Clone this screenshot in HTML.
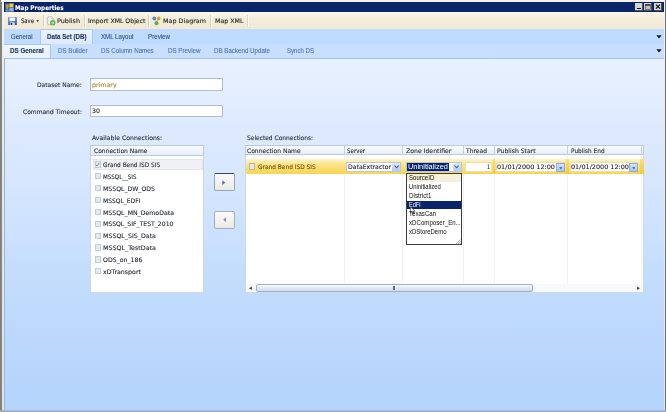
<!DOCTYPE html>
<html><head><meta charset="utf-8">
<style>
*{box-sizing:border-box;margin:0;padding:0}
html,body{width:666px;height:412px;overflow:hidden;background:#c8c8c8}
body{position:relative;font-family:"DejaVu Sans","Liberation Sans",sans-serif;font-size:6px;color:#1c2a44}
#all{position:absolute;left:0;top:0;width:666px;height:412px;filter:blur(0.4px)}
.abs{position:absolute;white-space:nowrap}
span.abs{-webkit-text-stroke:0.1px currentColor}
</style></head><body><div id="all">
<!-- frame -->
<div class="abs" style="left:0;top:0;width:666px;height:412px;background:#c9c9c9"></div>
<div class="abs" style="left:0;top:0;width:1.5px;height:412px;background:#828282"></div>
<div class="abs" style="left:664.7px;top:0;width:1.3px;height:412px;background:#707070"></div>
<div class="abs" style="left:0;top:410.4px;width:666px;height:1.6px;background:#a8a8a8"></div>
<div class="abs" style="left:1px;top:0;width:663.7px;height:2px;background:#f2f2f0"></div>
<div class="abs" style="left:2px;top:0.6px;width:662.7px;height:409.9px;background:linear-gradient(#f6f5f1,#eeece6 60px,#e6e4de 100%)"></div>
<!-- title -->
<div class="abs" style="left:4px;top:2px;width:659.7px;height:10.2px;background:#0a246a"></div>
<!-- title icon -->
<svg class="abs" style="left:5px;top:2.8px" width="9" height="9" viewBox="0 0 9 9"><rect x="0" y="0" width="9" height="9" fill="#32508f"/><path d="M0.6 1.2 H3.8 V4 L3 6.2 H1.4 L0.6 4Z" fill="#b3964a"/><rect x="4.4" y="0.6" width="4" height="3.8" fill="#f4cc30"/><rect x="4.4" y="5" width="4.2" height="3.4" fill="#8fb0e4"/><rect x="0.6" y="6.6" width="3.2" height="1.8" fill="#7d9ad6"/></svg>
<!-- caption buttons -->
<div class="abs" style="left:635px;top:3.2px;width:8.3px;height:7.5px;background:#d6d3cc;border-right:1px solid #555;border-bottom:1px solid #555"></div>
<div class="abs" style="left:637px;top:8.2px;width:3.6px;height:1.2px;background:#111"></div>
<div class="abs" style="left:643.8px;top:3.2px;width:8.3px;height:7.5px;background:#d6d3cc;border-right:1px solid #555;border-bottom:1px solid #555"></div>
<svg class="abs" style="left:645px;top:3.8px" width="6" height="6" viewBox="0 0 6 6"><rect x="0.5" y="0.9" width="4.8" height="4.4" fill="#c4c2bc" stroke="#3a3a3a" stroke-width="0.6"/><rect x="0.2" y="0.3" width="5.4" height="1.3" fill="#222"/></svg>
<div class="abs" style="left:654px;top:3.2px;width:8.3px;height:7.5px;background:#d6d3cc;border-right:1px solid #555;border-bottom:1px solid #555"></div>
<svg class="abs" style="left:654px;top:3.2px" width="8.3" height="7.5" viewBox="0 0 8.3 7.5"><path d="M2 1.6 L6 5.6 M6 1.6 L2 5.6" stroke="#111" stroke-width="1.3" fill="none"/></svg>
<!-- toolbar -->
<div class="abs" style="left:4px;top:12.2px;width:659.7px;height:17px;background:linear-gradient(#fbf8ee,#f3ecd9 40%,#f1e9d3)"></div>
<div class="abs" style="left:43px;top:15px;width:1px;height:12px;background:#d6cfbb;box-shadow:1px 0 0 #fdfbf5"></div>
<div class="abs" style="left:83.8px;top:15px;width:1px;height:12px;background:#d6cfbb;box-shadow:1px 0 0 #fdfbf5"></div>
<div class="abs" style="left:148px;top:15px;width:1px;height:12px;background:#d6cfbb;box-shadow:1px 0 0 #fdfbf5"></div>
<div class="abs" style="left:210px;top:15px;width:1px;height:12px;background:#d6cfbb;box-shadow:1px 0 0 #fdfbf5"></div>
<div class="abs" style="left:246.6px;top:15px;width:1px;height:12px;background:#ded7c6;box-shadow:1px 0 0 #fdfbf5"></div>
<!-- save icon -->
<svg class="abs" style="left:8.2px;top:16.8px" width="8.8" height="8.4" viewBox="0 0 8.8 8.4"><defs><linearGradient id="sv" x1="0" y1="0" x2="1" y2="1"><stop offset="0" stop-color="#86a8e6"/><stop offset="1" stop-color="#27459a"/></linearGradient></defs><rect x="0" y="0" width="8.8" height="8.4" rx="0.6" fill="url(#sv)"/><rect x="1.6" y="0.5" width="5.6" height="3.7" fill="#f6f8fd"/><rect x="2.2" y="5.3" width="4.6" height="3.1" fill="#cdd6ec"/><rect x="2.8" y="5.9" width="1.4" height="2.2" fill="#26397a"/></svg>
<svg class="abs" style="left:36.2px;top:20.4px" width="3.4" height="2.4" viewBox="0 0 4 3"><path d="M0.2 0.3 H3.8 L2 2.6Z" fill="#222"/></svg>
<!-- publish icon -->
<svg class="abs" style="left:46.6px;top:16px" width="10" height="10" viewBox="0 0 10 10"><path d="M0.8 0.9 H4.8 L6.8 2.9 V8.4 H0.8Z" fill="#fcfcfc" stroke="#a4a8ae" stroke-width="0.7"/><path d="M4.8 0.9 V2.9 H6.8" fill="#e4e6ea" stroke="#a4a8ae" stroke-width="0.5"/><circle cx="5.7" cy="6.8" r="2.7" fill="#5db04a"/><path d="M4.2 6.9 H6.6 M5.6 5.6 L7 6.9 L5.6 8.2" stroke="#e3f8dc" stroke-width="0.8" fill="none"/></svg>
<!-- map diagram icon -->
<svg class="abs" style="left:152px;top:16px" width="9" height="10" viewBox="0 0 9 10"><circle cx="2.3" cy="2.4" r="1.9" fill="#4a8bd8"/><circle cx="6.7" cy="2.4" r="1.9" fill="#e4a620"/><circle cx="4.5" cy="7.2" r="2" fill="#59b347"/><path d="M2.3 2.4 L4.5 7.2 L6.7 2.4" stroke="#8a8a8a" stroke-width="0.6" fill="none"/></svg>
<!-- tabs row1 -->
<div class="abs" style="left:4px;top:29.2px;width:659.7px;height:14.6px;background:#bfdbff"></div>
<div class="abs" style="left:40.4px;top:29.4px;width:52.8px;height:14.6px;background:linear-gradient(#eaf3ff,#dde9fd);border:0.6px solid #a9c9f2;border-bottom:none;border-radius:2px 2px 0 0"></div>
<div class="abs" style="left:4px;top:43.8px;width:659.7px;height:0.8px;background:#b3d2f8"></div>
<!-- tabs row2 -->
<div class="abs" style="left:4px;top:44.4px;width:659.7px;height:13.8px;background:#c9dfff"></div>
<div class="abs" style="left:4px;top:44.4px;width:46.8px;height:14.2px;background:linear-gradient(#f0f6ff,#e8f1ff);border:0.6px solid #a9c9f2;border-bottom:none;border-left:none;border-radius:0 2px 0 0"></div>
<svg class="abs" style="left:656px;top:35px" width="6" height="4" viewBox="0 0 6 4"><path d="M0.3 0.3 H5.7 L3 3.6Z" fill="#1a1a1a"/></svg>
<svg class="abs" style="left:656px;top:49px" width="6" height="4" viewBox="0 0 6 4"><path d="M0.3 0.3 H5.7 L3 3.6Z" fill="#1a1a1a"/></svg>
<!-- content -->
<div class="abs" style="left:3.6px;top:58px;width:660.1px;height:352.5px;border-top:1px solid #9fc4f1;border-left:1.2px solid #93b6e6;border-bottom:1px solid #9dc0ee;background:linear-gradient(#e9f1ff 0%,#dfebfe 17%,#d3e5fe 40%,#c6defd 58%,#bcd8fc 77%,#b4d4fc 100%)"></div>
<!-- inputs -->
<div class="abs" style="left:90.3px;top:78.2px;width:132.6px;height:12.4px;background:#fff;border:0.8px solid #b0bdd0"></div>
<div class="abs" style="left:90.3px;top:104.6px;width:132.6px;height:12.6px;background:#fff;border:0.8px solid #b0bdd0"></div>
<!-- available list -->
<div class="abs" style="left:90.3px;top:144.6px;width:114.2px;height:148.4px;background:#fff;border:0.8px solid #ccd7e7"></div>
<div class="abs" style="left:90.3px;top:144.6px;width:114.2px;height:11px;background:linear-gradient(#fafcff,#e6eefa);border:0.8px solid #bccadd"></div>
<div class="abs" style="left:92.6px;top:158.6px;width:110.4px;height:11.8px;background:#f0f1f4;border:0.6px solid #e4e6ea"></div>
<div class="abs" style="left:94.6px;top:161.40px;width:6.2px;height:6.2px;background:#e4e9f0;border:0.8px solid #c2cbd8"></div>
<div class="abs" style="left:94.6px;top:173.27px;width:6.2px;height:6.2px;background:#e4e9f0;border:0.8px solid #c2cbd8"></div>
<div class="abs" style="left:94.6px;top:185.14px;width:6.2px;height:6.2px;background:#e4e9f0;border:0.8px solid #c2cbd8"></div>
<div class="abs" style="left:94.6px;top:197.01px;width:6.2px;height:6.2px;background:#e4e9f0;border:0.8px solid #c2cbd8"></div>
<div class="abs" style="left:94.6px;top:208.88px;width:6.2px;height:6.2px;background:#e4e9f0;border:0.8px solid #c2cbd8"></div>
<div class="abs" style="left:94.6px;top:220.75px;width:6.2px;height:6.2px;background:#e4e9f0;border:0.8px solid #c2cbd8"></div>
<div class="abs" style="left:94.6px;top:232.62px;width:6.2px;height:6.2px;background:#e4e9f0;border:0.8px solid #c2cbd8"></div>
<div class="abs" style="left:94.6px;top:244.49px;width:6.2px;height:6.2px;background:#e4e9f0;border:0.8px solid #c2cbd8"></div>
<div class="abs" style="left:94.6px;top:256.36px;width:6.2px;height:6.2px;background:#e4e9f0;border:0.8px solid #c2cbd8"></div>
<div class="abs" style="left:94.6px;top:268.23px;width:6.2px;height:6.2px;background:#e4e9f0;border:0.8px solid #c2cbd8"></div>
<svg class="abs" style="left:95.4px;top:162.2px" width="5" height="5" viewBox="0 0 5 5"><path d="M0.8 2.6 L2 3.9 L4.3 0.9" stroke="#6a7890" stroke-width="0.9" fill="none"/></svg>
<!-- buttons -->
<div class="abs" style="left:213.8px;top:173.2px;width:21.6px;height:18.2px;border:0.9px solid #98a4b8;border-top:1px solid #2a4684;border-radius:2px;background:linear-gradient(#faf9f7,#f3f2ee 50%,#e9e9e6)"></div>
<svg class="abs" style="left:221.8px;top:179.6px" width="3.4" height="5.4" viewBox="0 0 3.4 5.4"><path d="M0.3 0.2 L3.2 2.7 L0.3 5.2Z" fill="#4a76bf"/></svg>
<div class="abs" style="left:213.8px;top:210.6px;width:21.6px;height:18.2px;border:0.9px solid #a3aec0;border-radius:2px;background:linear-gradient(#faf9f7,#f3f2ee 50%,#e9e9e6)"></div>
<svg class="abs" style="left:222.6px;top:217px" width="3.4" height="5.4" viewBox="0 0 3.4 5.4"><path d="M3.1 0.2 L0.2 2.7 L3.1 5.2Z" fill="#6d92d2"/></svg>
<!-- selected grid -->
<div class="abs" style="left:244.5px;top:145px;width:399.8px;height:148px;background:#fff;border:0.8px solid #ccd7e7"></div>
<div class="abs" style="left:244.5px;top:145px;width:399.8px;height:10.4px;background:linear-gradient(#fafcff,#e6eefa);border:0.8px solid #bccadd"></div>
<div class="abs" style="left:344.0px;top:146.4px;width:1px;height:9px;background:#c3d0e2"></div>
<div class="abs" style="left:344.0px;top:156px;width:1px;height:127.8px;background:#edf1f8"></div>
<div class="abs" style="left:402.0px;top:146.4px;width:1px;height:9px;background:#c3d0e2"></div>
<div class="abs" style="left:402.0px;top:156px;width:1px;height:127.8px;background:#edf1f8"></div>
<div class="abs" style="left:463.0px;top:146.4px;width:1px;height:9px;background:#c3d0e2"></div>
<div class="abs" style="left:463.0px;top:156px;width:1px;height:127.8px;background:#edf1f8"></div>
<div class="abs" style="left:493.6px;top:146.4px;width:1px;height:9px;background:#c3d0e2"></div>
<div class="abs" style="left:493.6px;top:156px;width:1px;height:127.8px;background:#edf1f8"></div>
<div class="abs" style="left:567.2px;top:146.4px;width:1px;height:9px;background:#c3d0e2"></div>
<div class="abs" style="left:567.2px;top:156px;width:1px;height:127.8px;background:#edf1f8"></div>
<div class="abs" style="left:641.0px;top:146.4px;width:1px;height:9px;background:#c3d0e2"></div>
<div class="abs" style="left:641.0px;top:156px;width:1px;height:127.8px;background:#edf1f8"></div>
<!-- yellow row -->
<div class="abs" style="left:246.4px;top:158.6px;width:397.2px;height:15.4px;border-radius:1.5px 0 0 1.5px;background:linear-gradient(#fdf4cc 0%,#fbe58a 35%,#f9dc68 70%,#f7d452 100%);"></div>
<div class="abs" style="left:492.6px;top:158.6px;width:2.4px;height:15.4px;background:linear-gradient(#fbe07a,#f5c53a)"></div>
<div class="abs" style="left:566.2px;top:158.6px;width:2.6px;height:15.4px;background:linear-gradient(#fbe07a,#f5c53a)"></div>
<div class="abs" style="left:639.6px;top:158.6px;width:4.0px;height:15.4px;background:linear-gradient(#fbe07a,#f5c53a)"></div>
<div class="abs" style="left:248.8px;top:163.3px;width:6.4px;height:6.6px;background:#ece9dc;border:0.7px solid #b9b6a8"></div>
<!-- server combo -->
<div class="abs" style="left:346.4px;top:162.2px;width:54.6px;height:9.8px;background:#fff;border:0.8px solid #b9c8dc"></div>
<div class="abs" style="left:392.4px;top:163.2px;width:7.6px;height:7.8px;background:linear-gradient(#dce8fd,#b5cbf5);border-radius:1px"></div>
<svg class="abs" style="left:393.6px;top:165.4px" width="5.2" height="3.6" viewBox="0 0 5.2 3.6"><path d="M0.5 0.5 L2.6 2.8 L4.7 0.5" stroke="#3c5a96" stroke-width="1.1" fill="none"/></svg>
<!-- zone combo -->
<div class="abs" style="left:406.2px;top:162.2px;width:56px;height:9.8px;background:#fff;border:0.8px solid #b9c8dc"></div>
<div class="abs" style="left:407.2px;top:163.2px;width:41.4px;height:7.8px;background:#0a246a"></div>
<div class="abs" style="left:453px;top:163.2px;width:8.2px;height:7.8px;background:linear-gradient(#dce8fd,#b5cbf5);border-radius:1px"></div>
<svg class="abs" style="left:454px;top:165.4px" width="5.2" height="3.6" viewBox="0 0 5.2 3.6"><path d="M0.5 0.5 L2.6 2.8 L4.7 0.5" stroke="#3c5a96" stroke-width="1.1" fill="none"/></svg>
<!-- thread -->
<div class="abs" style="left:465.4px;top:162px;width:26.4px;height:10.4px;background:#fff;border:0.7px solid #eadfae"></div>
<!-- publish start/end -->
<div class="abs" style="left:495.6px;top:162px;width:69.6px;height:10.4px;background:#fff;border:0.7px solid #eadfae"></div>
<div class="abs" style="left:556.4px;top:162.6px;width:8.4px;height:9.4px;background:linear-gradient(#d3e2fb,#a9c5f2);border:0.8px solid #8eabdc"></div>
<svg class="abs" style="left:558.8px;top:166.6px" width="3.6" height="2.6" viewBox="0 0 3.6 2.6"><path d="M0.2 0.2 H3.4 L1.8 2.3Z" fill="#3557a0"/></svg>
<div class="abs" style="left:569.6px;top:162px;width:68.4px;height:10.4px;background:#fff;border:0.7px solid #eadfae"></div>
<div class="abs" style="left:629.2px;top:162.6px;width:8.4px;height:9.4px;background:linear-gradient(#d3e2fb,#a9c5f2);border:0.8px solid #8eabdc"></div>
<svg class="abs" style="left:631.6px;top:166.6px" width="3.6" height="2.6" viewBox="0 0 3.6 2.6"><path d="M0.2 0.2 H3.4 L1.8 2.3Z" fill="#3557a0"/></svg>
<!-- dropdown list -->
<div class="abs" style="left:406.2px;top:173px;width:55.6px;height:72.4px;background:#fff;border:1px solid #3a3a3a"></div>
<div class="abs" style="left:407.2px;top:174px;width:53.6px;height:8.2px;background:#f6f0dc"></div>
<div class="abs" style="left:407.2px;top:201px;width:53.6px;height:7.6px;background:#0a246a"></div>
<svg class="abs" style="left:455px;top:239px" width="6" height="6" viewBox="0 0 6 6"><path d="M5.5 0.5 L0.5 5.5 M5.5 2.5 L2.5 5.5 M5.5 4.3 L4.3 5.5" stroke="#8a8a8a" stroke-width="0.7"/></svg>
<svg class="abs" style="left:410px;top:205.6px" width="6" height="9" viewBox="0 0 6 9"><path d="M0.4 0.4 V7 L2 5.6 L3.1 8.2 L4.1 7.8 L3 5.3 H5Z" fill="#fff" stroke="#111" stroke-width="0.6"/></svg>
<!-- scrollbar -->
<div class="abs" style="left:245.5px;top:283.8px;width:397.5px;height:8.6px;background:#f7f9fc"></div>
<div class="abs" style="left:255.6px;top:284.2px;width:277.8px;height:8px;background:linear-gradient(#f8fafd,#e4ebf5 45%,#cfdbeb);border:0.8px solid #a3b1c7;border-radius:2px"></div>
<div class="abs" style="left:392.8px;top:286.4px;width:0.8px;height:3.8px;background:#5a6a86"></div>
<div class="abs" style="left:394.4px;top:286.4px;width:0.8px;height:3.8px;background:#5a6a86"></div>
<svg class="abs" style="left:249px;top:286.2px" width="3" height="4.4" viewBox="0 0 3 4"><path d="M2.8 0.2 L0.2 2 L2.8 3.8Z" fill="#333"/></svg>
<svg class="abs" style="left:637px;top:286.2px" width="3" height="4.4" viewBox="0 0 3 4"><path d="M0.2 0.2 L2.8 2 L0.2 3.8Z" fill="#333"/></svg>
<span class="abs" style="left:14.50px;top:2.65px;line-height:10px;font-family:'DejaVu Sans','Liberation Sans',sans-serif;font-weight:bold;font-size:6.30px;color:#ffffff;transform-origin:0 50%;transform:scaleX(0.8922);">Map Properties</span>
<span class="abs" style="left:20.50px;top:16.25px;line-height:10px;font-family:'DejaVu Sans','Liberation Sans',sans-serif;font-weight:normal;font-size:6.30px;color:#222222;transform-origin:0 50%;transform:scaleX(0.8406);">Save</span>
<span class="abs" style="left:57.00px;top:16.25px;line-height:10px;font-family:'DejaVu Sans','Liberation Sans',sans-serif;font-weight:normal;font-size:6.10px;color:#222222;transform-origin:0 50%;transform:scaleX(1.0577);">Publish</span>
<span class="abs" style="left:87.50px;top:16.25px;line-height:10px;font-family:'DejaVu Sans','Liberation Sans',sans-serif;font-weight:normal;font-size:6.10px;color:#222222;transform-origin:0 50%;transform:scaleX(1.0118);">Import XML Object</span>
<span class="abs" style="left:163.00px;top:16.25px;line-height:10px;font-family:'DejaVu Sans','Liberation Sans',sans-serif;font-weight:normal;font-size:6.10px;color:#222222;transform-origin:0 50%;transform:scaleX(1.0487);">Map Diagram</span>
<span class="abs" style="left:215.00px;top:16.25px;line-height:10px;font-family:'DejaVu Sans','Liberation Sans',sans-serif;font-weight:normal;font-size:6.10px;color:#222222;transform-origin:0 50%;transform:scaleX(1.0306);">Map XML</span>
<span class="abs" style="left:10.50px;top:31.80px;line-height:10px;font-family:'Liberation Sans',sans-serif;font-weight:normal;font-size:7.00px;color:#2d4f85;transform-origin:0 50%;transform:scaleX(0.8633);">General</span>
<span class="abs" style="left:46.80px;top:31.80px;line-height:10px;font-family:'Liberation Sans',sans-serif;font-weight:bold;font-size:7.00px;color:#17305f;transform-origin:0 50%;transform:scaleX(0.8853);">Data Set (DB)</span>
<span class="abs" style="left:100.50px;top:31.80px;line-height:10px;font-family:'Liberation Sans',sans-serif;font-weight:normal;font-size:7.00px;color:#2d4f85;transform-origin:0 50%;transform:scaleX(0.8760);">XML Layout</span>
<span class="abs" style="left:148.00px;top:31.80px;line-height:10px;font-family:'Liberation Sans',sans-serif;font-weight:normal;font-size:7.00px;color:#2d4f85;transform-origin:0 50%;transform:scaleX(0.8836);">Preview</span>
<span class="abs" style="left:10.00px;top:46.20px;line-height:10px;font-family:'Liberation Sans',sans-serif;font-weight:bold;font-size:7.00px;color:#17305f;transform-origin:0 50%;transform:scaleX(0.8930);">DS General</span>
<span class="abs" style="left:58.00px;top:46.20px;line-height:10px;font-family:'Liberation Sans',sans-serif;font-weight:normal;font-size:7.00px;color:#4a72b0;transform-origin:0 50%;transform:scaleX(0.8816);">DS Builder</span>
<span class="abs" style="left:101.00px;top:46.20px;line-height:10px;font-family:'Liberation Sans',sans-serif;font-weight:normal;font-size:7.00px;color:#4a72b0;transform-origin:0 50%;transform:scaleX(0.8797);">DS Column Names</span>
<span class="abs" style="left:168.00px;top:46.20px;line-height:10px;font-family:'Liberation Sans',sans-serif;font-weight:normal;font-size:7.00px;color:#4a72b0;transform-origin:0 50%;transform:scaleX(0.8887);">DS Preview</span>
<span class="abs" style="left:214.00px;top:46.20px;line-height:10px;font-family:'Liberation Sans',sans-serif;font-weight:normal;font-size:7.00px;color:#4a72b0;transform-origin:0 50%;transform:scaleX(0.8828);">DB Backend Update</span>
<span class="abs" style="left:286.50px;top:46.20px;line-height:10px;font-family:'Liberation Sans',sans-serif;font-weight:normal;font-size:7.00px;color:#4a72b0;transform-origin:0 50%;transform:scaleX(0.8674);">Synch DS</span>
<span class="abs" style="left:36.60px;top:80.25px;line-height:10px;font-family:'DejaVu Sans','Liberation Sans',sans-serif;font-weight:normal;font-size:6.10px;color:#262a33;transform-origin:0 50%;transform:scaleX(0.9765);">Dataset Name:</span>
<span class="abs" style="left:91.80px;top:80.05px;line-height:10px;font-family:'DejaVu Sans','Liberation Sans',sans-serif;font-weight:normal;font-size:6.10px;color:#a8862d;transform-origin:0 50%;transform:scaleX(1.0345);">primary</span>
<span class="abs" style="left:23.00px;top:106.75px;line-height:10px;font-family:'DejaVu Sans','Liberation Sans',sans-serif;font-weight:normal;font-size:6.10px;color:#262a33;transform-origin:0 50%;transform:scaleX(0.9790);">Command Timeout:</span>
<span class="abs" style="left:92.00px;top:106.45px;line-height:10px;font-family:'DejaVu Sans','Liberation Sans',sans-serif;font-weight:normal;font-size:6.10px;color:#222;transform-origin:0 50%;transform:scaleX(1.0305);">30</span>
<span class="abs" style="left:91.80px;top:132.65px;line-height:10px;font-family:'DejaVu Sans','Liberation Sans',sans-serif;font-weight:normal;font-size:6.10px;color:#262a33;transform-origin:0 50%;transform:scaleX(1.0130);">Available Connections:</span>
<span class="abs" style="left:94.00px;top:145.75px;line-height:10px;font-family:'DejaVu Sans','Liberation Sans',sans-serif;font-weight:normal;font-size:6.10px;color:#262a33;transform-origin:0 50%;transform:scaleX(0.9825);">Connection Name</span>
<span class="abs" style="left:103.00px;top:160.05px;line-height:10px;font-family:'DejaVu Sans','Liberation Sans',sans-serif;font-weight:normal;font-size:6.10px;color:#262a33;transform-origin:0 50%;transform:scaleX(0.9515);">Grand Bend ISD SIS</span>
<span class="abs" style="left:103.00px;top:171.92px;line-height:10px;font-family:'DejaVu Sans','Liberation Sans',sans-serif;font-weight:normal;font-size:6.10px;color:#262a33;transform-origin:0 50%;transform:scaleX(0.9090);">MSSQL__SIS</span>
<span class="abs" style="left:103.00px;top:183.79px;line-height:10px;font-family:'DejaVu Sans','Liberation Sans',sans-serif;font-weight:normal;font-size:6.10px;color:#262a33;transform-origin:0 50%;transform:scaleX(1.0115);">MSSQL_DW_ODS</span>
<span class="abs" style="left:103.00px;top:195.66px;line-height:10px;font-family:'DejaVu Sans','Liberation Sans',sans-serif;font-weight:normal;font-size:6.10px;color:#262a33;transform-origin:0 50%;transform:scaleX(0.9837);">MSSQL_EDFI</span>
<span class="abs" style="left:103.00px;top:207.53px;line-height:10px;font-family:'DejaVu Sans','Liberation Sans',sans-serif;font-weight:normal;font-size:6.10px;color:#262a33;transform-origin:0 50%;transform:scaleX(1.0168);">MSSQL_MN_DemoData</span>
<span class="abs" style="left:103.00px;top:219.40px;line-height:10px;font-family:'DejaVu Sans','Liberation Sans',sans-serif;font-weight:normal;font-size:6.10px;color:#262a33;transform-origin:0 50%;transform:scaleX(1.0037);">MSSQL_SIF_TEST_2010</span>
<span class="abs" style="left:103.00px;top:231.27px;line-height:10px;font-family:'DejaVu Sans','Liberation Sans',sans-serif;font-weight:normal;font-size:6.10px;color:#262a33;transform-origin:0 50%;transform:scaleX(1.0308);">MSSQL_SIS_Data</span>
<span class="abs" style="left:103.00px;top:243.14px;line-height:10px;font-family:'DejaVu Sans','Liberation Sans',sans-serif;font-weight:normal;font-size:6.10px;color:#262a33;transform-origin:0 50%;transform:scaleX(1.0426);">MSSQL_TestData</span>
<span class="abs" style="left:103.00px;top:255.01px;line-height:10px;font-family:'DejaVu Sans','Liberation Sans',sans-serif;font-weight:normal;font-size:6.10px;color:#262a33;transform-origin:0 50%;transform:scaleX(1.0203);">ODS_on_186</span>
<span class="abs" style="left:103.00px;top:266.88px;line-height:10px;font-family:'DejaVu Sans','Liberation Sans',sans-serif;font-weight:normal;font-size:6.10px;color:#262a33;transform-origin:0 50%;transform:scaleX(1.0289);">xDTransport</span>
<span class="abs" style="left:246.60px;top:132.95px;line-height:10px;font-family:'DejaVu Sans','Liberation Sans',sans-serif;font-weight:normal;font-size:6.10px;color:#262a33;transform-origin:0 50%;transform:scaleX(0.9701);">Selected Connections:</span>
<span class="abs" style="left:247.30px;top:145.75px;line-height:10px;font-family:'DejaVu Sans','Liberation Sans',sans-serif;font-weight:normal;font-size:6.10px;color:#262a33;transform-origin:0 50%;transform:scaleX(0.9862);">Connection Name</span>
<span class="abs" style="left:347.40px;top:145.75px;line-height:10px;font-family:'DejaVu Sans','Liberation Sans',sans-serif;font-weight:normal;font-size:6.10px;color:#262a33;transform-origin:0 50%;transform:scaleX(0.9047);">Server</span>
<span class="abs" style="left:406.00px;top:145.75px;line-height:10px;font-family:'DejaVu Sans','Liberation Sans',sans-serif;font-weight:normal;font-size:6.10px;color:#262a33;transform-origin:0 50%;transform:scaleX(1.0100);">Zone Identifier</span>
<span class="abs" style="left:465.80px;top:145.75px;line-height:10px;font-family:'DejaVu Sans','Liberation Sans',sans-serif;font-weight:normal;font-size:6.10px;color:#262a33;transform-origin:0 50%;transform:scaleX(0.9845);">Thread</span>
<span class="abs" style="left:497.00px;top:145.75px;line-height:10px;font-family:'DejaVu Sans','Liberation Sans',sans-serif;font-weight:normal;font-size:6.10px;color:#262a33;transform-origin:0 50%;transform:scaleX(1.0029);">Publish Start</span>
<span class="abs" style="left:571.00px;top:145.75px;line-height:10px;font-family:'DejaVu Sans','Liberation Sans',sans-serif;font-weight:normal;font-size:6.10px;color:#262a33;transform-origin:0 50%;transform:scaleX(0.9525);">Publish End</span>
<span class="abs" style="left:257.50px;top:162.45px;line-height:10px;font-family:'DejaVu Sans','Liberation Sans',sans-serif;font-weight:normal;font-size:6.10px;color:#6b4a10;transform-origin:0 50%;transform:scaleX(0.9614);">Grand Bend ISD SIS</span>
<span class="abs" style="left:348.00px;top:162.45px;line-height:10px;font-family:'DejaVu Sans','Liberation Sans',sans-serif;font-weight:normal;font-size:6.10px;color:#222;transform-origin:0 50%;transform:scaleX(1.0082);">DataExtractor</span>
<span class="abs" style="left:407.60px;top:162.00px;line-height:10px;font-family:'Liberation Sans',sans-serif;font-weight:normal;font-size:6.40px;color:#ffffff;transform-origin:0 50%;transform:scaleX(1.1591);-webkit-text-stroke:0;">Uninitialized</span>
<span class="abs" style="left:487.30px;top:162.45px;line-height:10px;font-family:'DejaVu Sans','Liberation Sans',sans-serif;font-weight:normal;font-size:6.10px;color:#222;transform-origin:0 50%;transform:scaleX(0.7724);">1</span>
<span class="abs" style="left:497.00px;top:162.45px;line-height:10px;font-family:'DejaVu Sans','Liberation Sans',sans-serif;font-weight:normal;font-size:6.10px;color:#222;transform-origin:0 50%;transform:scaleX(1.0607);">01/01/2000 12:00</span>
<span class="abs" style="left:571.00px;top:162.45px;line-height:10px;font-family:'DejaVu Sans','Liberation Sans',sans-serif;font-weight:normal;font-size:6.10px;color:#222;transform-origin:0 50%;transform:scaleX(1.0607);">01/01/2000 12:00</span>
<span class="abs" style="left:408.50px;top:173.00px;line-height:10px;font-family:'Liberation Sans',sans-serif;font-weight:normal;font-size:6.60px;color:#111;transform-origin:0 50%;transform:scaleX(0.9195);-webkit-text-stroke:0;">SourceID</span>
<span class="abs" style="left:408.50px;top:182.20px;line-height:10px;font-family:'Liberation Sans',sans-serif;font-weight:normal;font-size:6.60px;color:#111;transform-origin:0 50%;transform:scaleX(0.8935);-webkit-text-stroke:0;">Uninitialized</span>
<span class="abs" style="left:408.50px;top:191.00px;line-height:10px;font-family:'Liberation Sans',sans-serif;font-weight:normal;font-size:6.60px;color:#111;transform-origin:0 50%;transform:scaleX(0.9439);-webkit-text-stroke:0;">District1</span>
<span class="abs" style="left:408.50px;top:200.00px;line-height:10px;font-family:'Liberation Sans',sans-serif;font-weight:normal;font-size:6.60px;color:#ffffff;transform-origin:0 50%;transform:scaleX(0.8474);-webkit-text-stroke:0;">EdFi</span>
<span class="abs" style="left:408.50px;top:209.00px;line-height:10px;font-family:'Liberation Sans',sans-serif;font-weight:normal;font-size:6.60px;color:#111;transform-origin:0 50%;transform:scaleX(0.9234);-webkit-text-stroke:0;">TexasCan</span>
<span class="abs" style="left:408.50px;top:218.30px;line-height:10px;font-family:'Liberation Sans',sans-serif;font-weight:normal;font-size:6.60px;color:#111;transform-origin:0 50%;transform:scaleX(0.9290);-webkit-text-stroke:0;">xDComposer_En...</span>
<span class="abs" style="left:408.50px;top:226.80px;line-height:10px;font-family:'Liberation Sans',sans-serif;font-weight:normal;font-size:6.60px;color:#111;transform-origin:0 50%;transform:scaleX(0.9047);-webkit-text-stroke:0;">xDStoreDemo</span>
</div></body></html>
